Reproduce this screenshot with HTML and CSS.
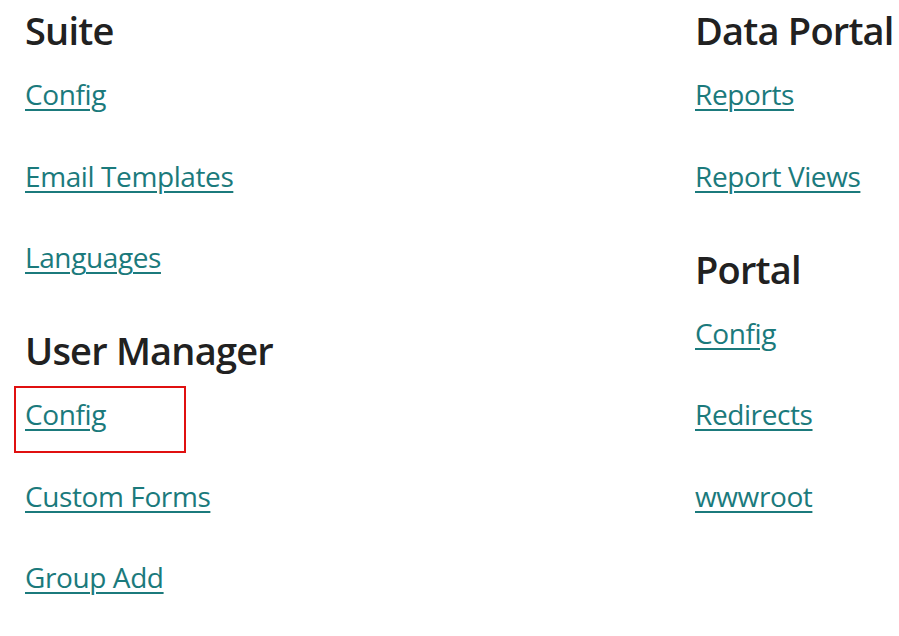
FILE: index.html
```html
<!DOCTYPE html>
<html lang="en">
<head>
<meta charset="utf-8">
<title>Admin</title>
<link rel="stylesheet" href="styles.css">
</head>
<body>
<div class="page">
  <div class="col">
    <section class="group">
      <h2 class="group-title">Suite</h2>
      <ul class="links">
        <li><a href="#">Config</a></li>
        <li><a href="#">Email Templates</a></li>
        <li><a href="#">Languages</a></li>
      </ul>
    </section>
    <section class="group">
      <h2 class="group-title">User Manager</h2>
      <ul class="links">
        <li class="marked"><a href="#">Config</a></li>
        <li><a href="#">Custom Forms</a></li>
        <li><a href="#">Group Add</a></li>
      </ul>
    </section>
  </div>
  <div class="col">
    <section class="group">
      <h2 class="group-title">Data Portal</h2>
      <ul class="links">
        <li><a href="#">Reports</a></li>
        <li><a href="#">Report Views</a></li>
      </ul>
    </section>
    <section class="group">
      <h2 class="group-title">Portal</h2>
      <ul class="links">
        <li><a href="#">Config</a></li>
        <li><a href="#">Redirects</a></li>
        <li><a href="#">wwwroot</a></li>
      </ul>
    </section>
  </div>
</div>
</body>
</html>
```
FILE: styles.css
```css
html, body {
  margin: 0;
  padding: 0;
  background: #ffffff;
}
body {
  font-family: "Open Sans", "Noto Sans", sans-serif;
  overflow: hidden;
}
.page {
  display: grid;
  grid-template-columns: 670px auto;
  padding: 6px 0 0 25px;
}
.group {
  padding-bottom: 7.25px;
}
.group-title {
  margin: 0;
  font-size: 38px;
  line-height: 48px;
  font-weight: 600;
  letter-spacing: -0.8px;
  color: #212121;
  white-space: nowrap;
}
.links {
  list-style: none;
  margin: 20.25px 0 0;
  padding: 0;
}
.links li {
  height: 40px;
  line-height: 40px;
  margin-bottom: 41.5px;
  font-size: 28px;
  letter-spacing: -0.4px;
  white-space: nowrap;
}
.links a {
  color: #1b7a7c;
  text-decoration: underline;
  text-decoration-thickness: 2px;
  text-underline-offset: 4px;
}
.marked {
  position: relative;
}
.marked::after {
  content: "";
  position: absolute;
  left: -11px;
  top: -8px;
  width: 168px;
  height: 63px;
  border: 2px solid #e01010;
}
```
